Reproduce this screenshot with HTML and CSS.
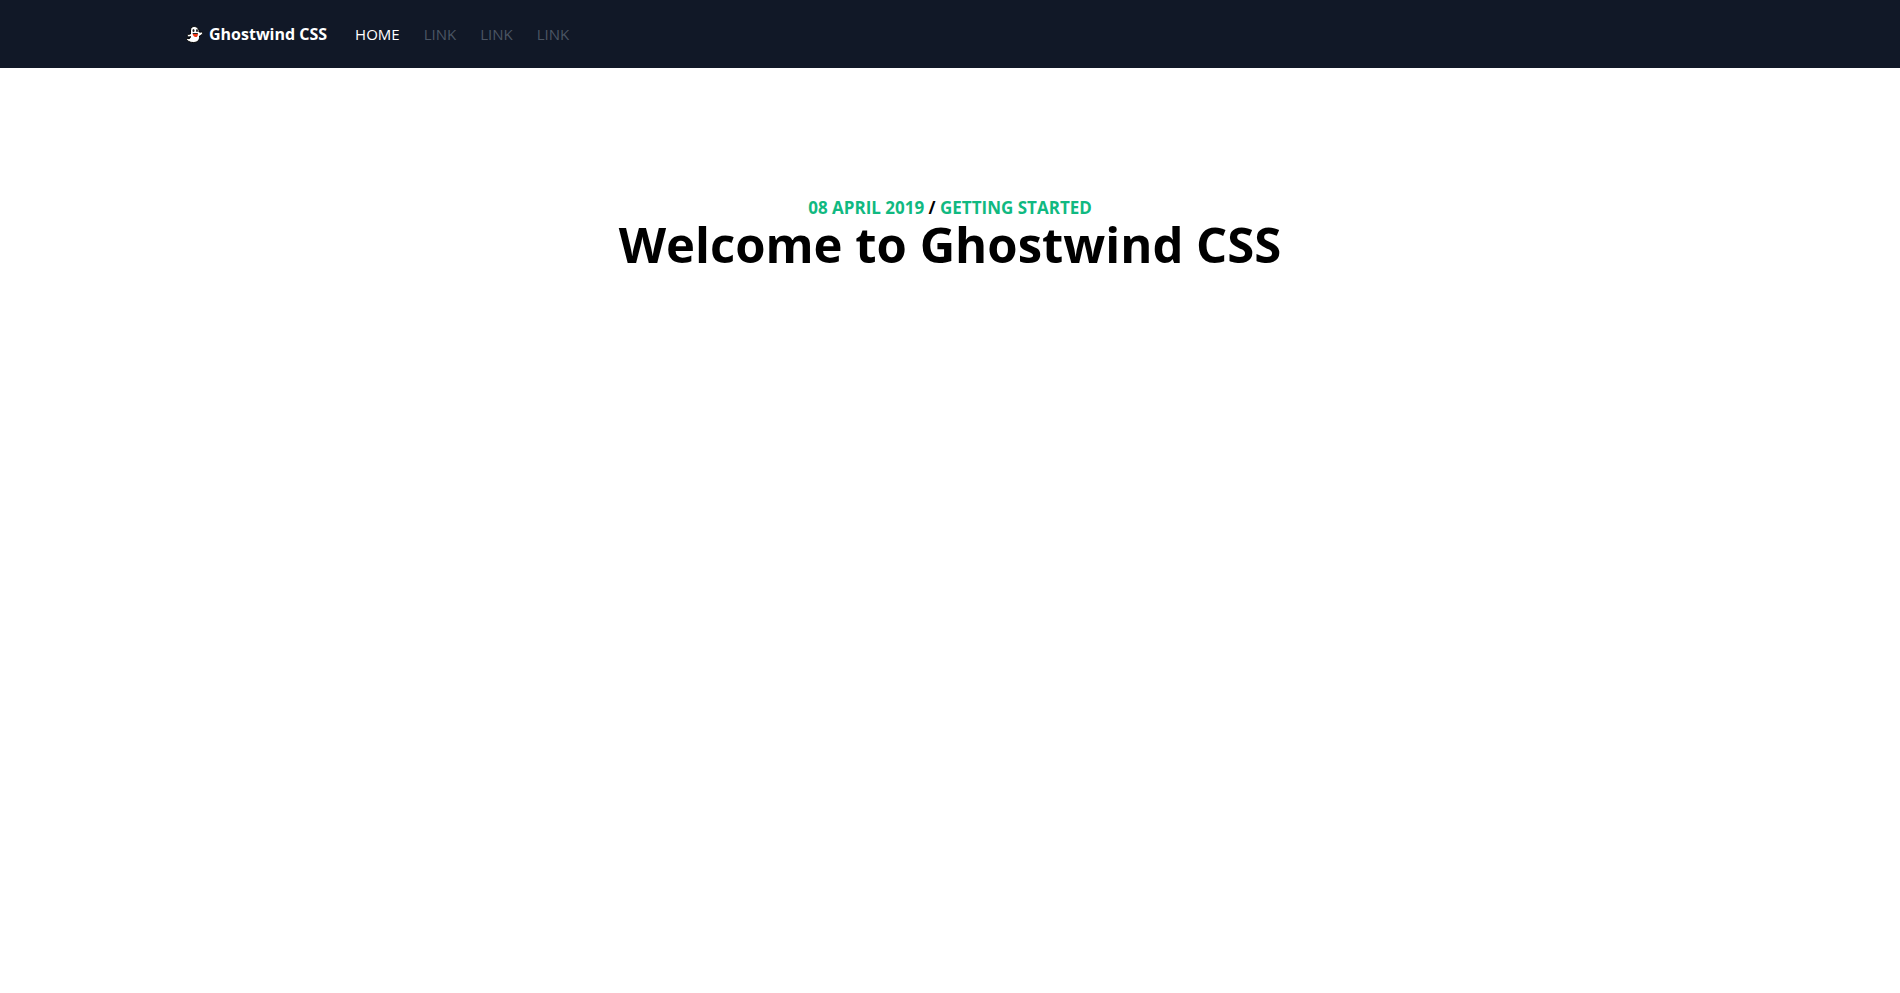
FILE: index.html
```html
<!DOCTYPE html>
<html lang="en">
<head>
<meta charset="UTF-8">
<meta name="viewport" content="width=device-width, initial-scale=1">
<title>Welcome to Ghostwind CSS</title>
<link rel="stylesheet" href="styles.css">
</head>
<body>
<nav class="navbar">
	<div class="container">
		<a class="brand" href="#">
			<svg class="ghost" viewBox="0 0 34 34" aria-hidden="true">
				<path d="M12 2C18-1 27 3 26 12c2 0 3 1 5 0 3 0 3 4 1 5-2 2-4 2-5 3 1 8-4 13-12 13-5 0-9-1-12-4-3-2-2-5 1-4 3 1 5-1 5-4-4 2-8 0-6-3 1-2 4-1 6-2C9 11 8 5 12 2z" fill="#fff" stroke="#000" stroke-width="2"/>
				<ellipse cx="15" cy="9" rx="2" ry="3" fill="#222"/>
				<ellipse cx="22" cy="9" rx="2" ry="3" fill="#222"/>
				<path d="M13 15h11c0 6-3 8-5 7-2 0-5-2-6-7z" fill="#f03a17"/>
				<path d="M13 14h11l-1 2h-9z" fill="#222"/>
			</svg>
			<span>Ghostwind CSS</span>
		</a>
		<ul class="menu">
			<li><a class="active" href="#">Home</a></li>
			<li><a href="#">Link</a></li>
			<li><a href="#">Link</a></li>
			<li><a href="#">Link</a></li>
		</ul>
	</div>
</nav>
<main class="post">
	<p class="meta"><a href="#">08 April 2019</a> / <a href="#">Getting Started</a></p>
	<h1>Welcome to Ghostwind CSS</h1>
</main>
</body>
</html>
```

FILE: styles.css
```css
body{
	margin : 0;
	background-color : #fff;
	color : #000;
	font-family : "Open Sans", "Noto Sans", sans-serif;
	font-size : 16px;
	line-height : 24px;
}

a{
	color : inherit;
	text-decoration : none;
}

.navbar{
	background-color : #111827;
}

.container{
	display : flex;
	align-items : center;
	gap : 28px;
	max-width : 1528px;
	margin : 0 auto;
	padding : 22px 0;
}

.brand{
	display : flex;
	align-items : center;
	gap : 6px;
	color : #fff;
	font-weight : 700;
}

.ghost{
	width : 17px;
	height : 17px;
}

.menu{
	display : flex;
	gap : 24px;
	margin : 0;
	padding : 0;
	list-style : none;
	color : #4b5563;
	font-size : 15px;
	text-transform : uppercase;
}

.active{
	color : #fff;
}

.post{
	padding : 128px 16px;
	text-align : center;
}

.meta{
	margin : 0;
	font-size : 17px;
	font-weight : 700;
	text-transform : uppercase;
}

.meta a{
	color : #10b981;
}

h1{
	margin : 0;
	font-size : 49px;
	font-weight : 700;
	line-height : 48px;
}
```
